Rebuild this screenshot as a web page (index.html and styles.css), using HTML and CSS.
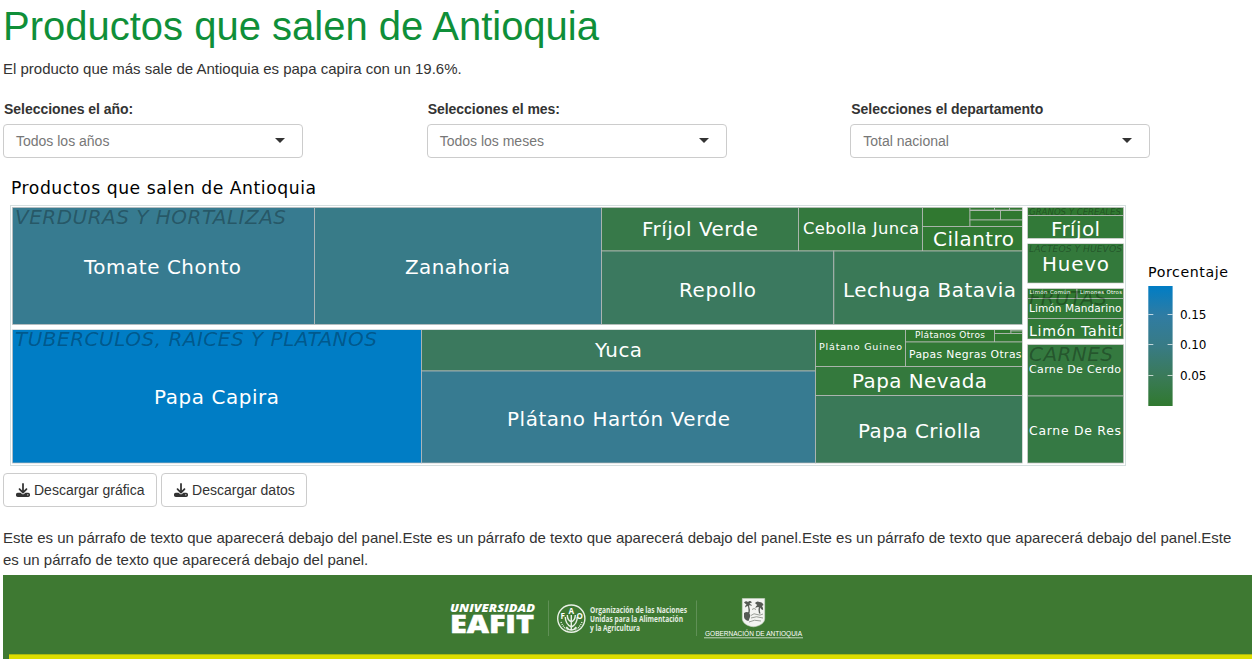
FILE: index.html
```html
<!DOCTYPE html>
<html lang="es">
<head>
<meta charset="utf-8">
<title>Productos que salen de Antioquia</title>
<link rel="stylesheet" href="styles.css">
</head>
<body>
<main class="page">
  <h1 class="title">Productos que salen de Antioquia</h1>
  <p class="lead">El producto que más sale de Antioquia es papa capira con un 19.6%.</p>
  <div class="filters">
    <div class="filter"><span class="filter-label">Selecciones el año:</span>
      <button class="select" type="button">Todos los años<span class="caret"></span></button></div>
    <div class="filter"><span class="filter-label">Selecciones el mes:</span>
      <button class="select" type="button">Todos los meses<span class="caret"></span></button></div>
    <div class="filter"><span class="filter-label">Selecciones el departamento</span>
      <button class="select" type="button">Total nacional<span class="caret"></span></button></div>
  </div>
  <svg class="chart" viewBox="3 170 1249 300" width="1249" height="300">
    <defs>
      <linearGradient id="scale" x1="0" y1="0" x2="0" y2="1">
        <stop offset="0" stop-color="#007dc5"/><stop offset=".25" stop-color="#307ca2"/><stop offset=".5" stop-color="#387b85"/><stop offset=".75" stop-color="#3a7a59"/><stop offset="1" stop-color="#30792f"/>
      </linearGradient>
    </defs>
    <text class="chart-title" x="11" y="193.5" textLength="305">Productos que salen de Antioquia</text>
    <rect class="frame" x="10.5" y="205.5" width="1115" height="260"/>
    <g class="tiles">
      <rect x="12.5" y="207.5" width="302" height="117" fill="#377b90"/>
      <rect x="314.5" y="207.5" width="287" height="117" fill="#387b88"/>
      <rect x="601.5" y="207.5" width="197" height="43.5" fill="#377949"/>
      <rect x="798.5" y="207.5" width="124" height="43.5" fill="#34793e"/>
      <rect x="922.5" y="207.5" width="47.5" height="19" fill="#307830"/>
      <rect x="970" y="207.5" width="24.5" height="2.5" fill="#307830"/>
      <rect x="994.5" y="207.5" width="15" height="2.5" fill="#307830"/>
      <rect x="1009.5" y="207.5" width="13" height="2.5" fill="#307830"/>
      <rect x="970" y="210.5" width="30.5" height="9.5" fill="#307830"/>
      <rect x="1000.5" y="210.5" width="22" height="9.5" fill="#307830"/>
      <rect x="970" y="220" width="52.5" height="6.5" fill="#307830"/>
      <rect x="922.5" y="226.5" width="100" height="24.5" fill="#317933"/>
      <rect x="601.5" y="251" width="232.3" height="73.5" fill="#3b795f"/>
      <rect x="833.8" y="251" width="188.7" height="73.5" fill="#3a7957"/>
      <rect x="12.5" y="329.5" width="409" height="133.5" fill="#007dc5"/>
      <rect x="421.5" y="329.5" width="394" height="41.5" fill="#3b795e"/>
      <rect x="421.5" y="371" width="394" height="92" fill="#377b91"/>
      <rect x="815.5" y="329.5" width="90" height="37" fill="#317936"/>
      <rect x="905.5" y="329.5" width="89" height="12.5" fill="#307830"/>
      <rect x="994.5" y="329.5" width="16.5" height="4" fill="#307830"/>
      <rect x="1011" y="329.5" width="11.5" height="1.5" fill="#307830"/>
      <rect x="1011" y="331" width="11.5" height="2.5" fill="#307830"/>
      <rect x="994.5" y="333.5" width="28" height="8.5" fill="#307830"/>
      <rect x="905.5" y="342" width="117" height="24.5" fill="#317936"/>
      <rect x="815.5" y="366.5" width="207" height="29" fill="#34793d"/>
      <rect x="815.5" y="395.5" width="207" height="67.5" fill="#3a7958"/>
      <rect x="1027.5" y="207.5" width="96" height="8" fill="#307831"/>
      <rect x="1027.5" y="215.5" width="96" height="23" fill="#327938"/>
      <rect x="1027.5" y="243.5" width="96" height="39.5" fill="#33793b"/>
      <rect x="1027.5" y="288.5" width="49.5" height="10" fill="#307831"/>
      <rect x="1077" y="288.5" width="46.5" height="10" fill="#307831"/>
      <rect x="1027.5" y="298.5" width="96" height="20" fill="#317936"/>
      <rect x="1027.5" y="318.5" width="96" height="20.5" fill="#317937"/>
      <rect x="1027.5" y="344.5" width="96" height="51.5" fill="#34793f"/>
      <rect x="1027.5" y="396" width="96" height="67" fill="#357944"/>
    </g>
    <g class="breaks">
      <path d="M12 327.2H1023M1024.9 207V464M1027 241.1H1124M1027 286H1124M1027 341.9H1124"/>
    </g>
    <g class="groups">
      <text x="15" y="223.5" textLength="271" font-size="20">VERDURAS Y HORTALIZAS</text>
      <text x="15" y="345.5" textLength="362" font-size="20">TUBERCULOS, RAICES Y PLATANOS</text>
      <text x="1029" y="214.5" textLength="92" font-size="8.6">GRANOS Y CEREALES</text>
      <text x="1029" y="251.5" textLength="93" font-size="9.2">LACTEOS Y HUEVOS</text>
      <text x="1029" y="304.5" textLength="78" font-size="20">FRUTAS</text>
      <text x="1029" y="360.5" textLength="84" font-size="20">CARNES</text>
    </g>
    <g class="labels">
      <text x="84" y="274" textLength="157">Tomate Chonto</text>
      <text x="405" y="274" textLength="105">Zanahoria</text>
      <text x="642" y="236" textLength="116">Fríjol Verde</text>
      <text x="803" y="234" textLength="116" font-size="16.4">Cebolla Junca</text>
      <text x="933" y="246" textLength="81">Cilantro</text>
      <text x="679" y="297" textLength="77">Repollo</text>
      <text x="843" y="297" textLength="173">Lechuga Batavia</text>
      <text x="154" y="404" textLength="125">Papa Capira</text>
      <text x="595" y="357" textLength="47">Yuca</text>
      <text x="507" y="426" textLength="223">Plátano Hartón Verde</text>
      <text x="819" y="350" textLength="83" font-size="9.5">Plátano Guineo</text>
      <text x="915" y="338" textLength="70" font-size="9">Plátanos Otros</text>
      <text x="909" y="358" textLength="112.5" font-size="10.8">Papas Negras Otras</text>
      <text x="852" y="388" textLength="135">Papa Nevada</text>
      <text x="858" y="438" textLength="123">Papa Criolla</text>
      <text x="1051" y="236" textLength="49">Fríjol</text>
      <text x="1042" y="271" textLength="67">Huevo</text>
      <text x="1029.5" y="294" textLength="41" font-size="5.4">Limón Común</text>
      <text x="1080" y="294" textLength="42" font-size="5.4">Limones Otros</text>
      <text x="1029" y="312" textLength="92.5" font-size="10.6">Limón Mandarino</text>
      <text x="1029" y="336" textLength="93" font-size="14.2">Limón Tahití</text>
      <text x="1029" y="373" textLength="92" font-size="11">Carne De Cerdo</text>
      <text x="1029" y="435" textLength="92" font-size="12.4">Carne De Res</text>
    </g>
    <g class="legend">
      <text x="1148" y="277" textLength="80" font-size="14.2">Porcentaje</text>
      <rect x="1148.3" y="286" width="24.3" height="120" fill="url(#scale)"/>
      <path d="M1148.3 314.5h5M1167.6 314.5h5M1148.3 344.5h5M1167.6 344.5h5M1148.3 375.5h5M1167.6 375.5h5"/>
      <text x="1180" y="319" textLength="26.5">0.15</text>
      <text x="1180" y="349" textLength="26.5">0.10</text>
      <text x="1180" y="380" textLength="26.5">0.05</text>
    </g>
  </svg>
  <div class="downloads">
    <button class="btn" type="button"><svg class="icon" viewBox="0 0 512 512"><path d="M288 32c0-18-14-32-32-32s-32 14-32 32v243l-73-74c-13-12-33-12-46 0s-12 33 0 46l128 128c13 12 33 12 46 0l128-128c12-13 12-33 0-46s-33-12-46 0l-73 74V32zM64 352c-35 0-64 29-64 64v32c0 35 29 64 64 64h384c35 0 64-29 64-64v-32c0-35-29-64-64-64H347l-46 45c-25 25-65 25-90 0l-46-45H64zm368 56a24 24 0 1 1 0 48 24 24 0 1 1 0-48z"/></svg>Descargar gráfica</button>
    <button class="btn" type="button"><svg class="icon" viewBox="0 0 512 512"><path d="M288 32c0-18-14-32-32-32s-32 14-32 32v243l-73-74c-13-12-33-12-46 0s-12 33 0 46l128 128c13 12 33 12 46 0l128-128c12-13 12-33 0-46s-33-12-46 0l-73 74V32zM64 352c-35 0-64 29-64 64v32c0 35 29 64 64 64h384c35 0 64-29 64-64v-32c0-35-29-64-64-64H347l-46 45c-25 25-65 25-90 0l-46-45H64zm368 56a24 24 0 1 1 0 48 24 24 0 1 1 0-48z"/></svg>Descargar datos</button>
  </div>
  <p class="note">Este es un párrafo de texto que aparecerá debajo del panel.Este es un párrafo de texto que aparecerá debajo del panel.Este es un párrafo de texto que aparecerá debajo del panel.Este es un párrafo de texto que aparecerá debajo del panel.</p>
  <footer class="footer">
    <svg class="logos" viewBox="440 575 370 79" width="370" height="79">
      <g class="eafit">
        <text class="university" x="450" y="612" font-size="10.5" textLength="85" lengthAdjust="spacingAndGlyphs">UNIVERSIDAD</text>
        <text class="heavy" x="450" y="632.5" font-size="24" textLength="84" lengthAdjust="spacingAndGlyphs">EAFIT</text>
      </g>
      <path class="divider" d="M548.5 600.5V636M696.5 600.5V636"/>
      <g class="fao">
        <circle cx="571.3" cy="618.6" r="13.6"/>
        <path d="M571.3 615V630M571.3 627q-6-3-6-10M571.3 627q6-3 6-10M571.3 622q-4-2-4-7M571.3 622q4-2 4-7M571.3 630q-3 0-5-3M571.3 630q3 0 5-3"/>
        <path class="motto" d="M561 622q3 7 8 8M582 622q-3 7-8 8"/>
        <text x="560.5" y="619">F</text><text x="568.4" y="614">A</text><text x="576.5" y="619">O</text>
      </g>
      <g class="org">
        <text x="590" y="613.2" textLength="97" lengthAdjust="spacingAndGlyphs">Organización de las Naciones</text>
        <text x="590" y="622" textLength="93" lengthAdjust="spacingAndGlyphs">Unidas para la Alimentación</text>
        <text x="590" y="631" textLength="50" lengthAdjust="spacingAndGlyphs">y la Agricultura</text>
      </g>
      <path class="shield" d="M742.3 598.5h22.4v20c0 4-4 7.500-11.200 8.300c-7.200-.8-11.200-4.300-11.200-8.300z"/>
      <path class="shield-art" d="M744 602.500q2-2 4-.5q2-2 4 .5q-2 0-2.500 1.500q2 0 2.500 2q-2-1-3-.5q1.500 4 .5 8.500h-1.200q.6-4-.3-8q-1.500 0-3 1.500q0-2 1.500-3q-1.500-1-2.500-2zM755 603q2-2.500 4.500-1q3 0 4 3l-1.500 1q1.500 2 1 4q-2-.5-3-2.500q-.5 3 .5 6h-1.500q-1-3-.2-6.500q-2 0-3.500 1q.5-2 2-3q-1.500-.8-2.300-2zM744 613q3-2 5 0q2 2 1 4l-1.500 4q-4-1-4.500-4z"/>
      <path class="shield-lines" d="M751 615.500q3-3 6-1q3 1.500 6-.5M751 618q5-2.500 12 0M749 622q5-3 12-1M752 609.500q2-2 4 0"/>
      <text class="gov" x="705" y="636.300" textLength="97" lengthAdjust="spacingAndGlyphs">GOBERNACIÓN DE ANTIOQUIA</text>
      <path class="gov-line" d="M704 637.800H803"/>
    </svg>
    <div class="stripe"></div>
  </footer>
</main>
</body>
</html>
```

FILE: styles.css
```css
* { box-sizing: border-box; }
html { overflow: hidden; }
body {
  margin: 0;
  overflow: hidden;
  height: 659px;
  background: #fff;
  color: #333;
  font-family: "Liberation Sans", Arial, sans-serif;
  font-size: 15px;
}
.page { padding-left: 3px; display: flex; flex-direction: column; }
.title {
  margin: 0;
  height: 58px;
  font-size: 40px;
  line-height: 52px;
  font-weight: 400;
  color: #0f8f39;
}
.lead { margin: 0; height: 41px; line-height: 22px; }
.filters { display: grid; grid-template-columns: repeat(3, 423.67px); height: 71px; }
.filter { display: flex; flex-direction: column; align-items: flex-start; }
.filter-label { height: 25px; line-height: 20px; font-size: 14px; font-weight: 700; padding-left: 1px; letter-spacing: -.04px; }
.select {
  display: flex;
  align-items: center;
  justify-content: space-between;
  width: 300px;
  height: 34px;
  padding: 0 17px 0 12px;
  border: 1px solid #ccc;
  border-radius: 4px;
  background: #fff;
  color: #777;
  font: 14px "Liberation Sans", Arial, sans-serif;
}
.caret { border: 5px solid transparent; border-top-color: #333; border-bottom: 0; margin-top: -2px; }
.chart { display: block; font-family: "DejaVu Sans", sans-serif; }
.chart-title { font-size: 17.2px; fill: #000; }
.frame { fill: none; stroke: #d5dfdf; }
.tiles rect { stroke: #bebebe; stroke-opacity: .72; stroke-width: 1; }
.breaks path { fill: none; stroke: #fff; stroke-width: 4.6; }
.groups { font-style: italic; fill: #000; fill-opacity: .3; }
.labels { fill: #fff; font-size: 19.9px; }
.legend { font-size: 12px; fill: #000; }
.legend path { stroke: #fff; stroke-opacity: .7; }
.downloads { display: flex; gap: 4px; padding-top: 3px; height: 57px; }
.btn {
  display: flex;
  align-items: center;
  gap: 4px;
  height: 34px;
  padding: 0 11.6px 0 12px;
  border: 1px solid #ccc;
  border-radius: 4px;
  background: #fff;
  color: #333;
  font: 14px "Liberation Sans", Arial, sans-serif;
}
.icon { width: 14px; height: 14px; fill: #333; }
.note { margin: 0; height: 48px; line-height: 22px; width: 1240px; }
.footer { height: 84px; background: #3e7932; display: flex; flex-direction: column; overflow: hidden; }
.logos { display: block; margin-left: 437px; flex: none; }
.stripe { height: 5px; margin-left: 6px; background: #dcdd00; border-top: 1px solid #a9b810; }
.eafit { fill: #fff; font-family: "Open Sans", sans-serif; font-weight: 800; }
.university { font-style: italic; }
.heavy { stroke: #fff; stroke-width: .5; }
.divider { stroke: #6a9660; stroke-width: .8; }
.fao { fill: none; stroke: #e8f0e5; stroke-width: 1.4; }
.fao text { fill: #fff; stroke: none; font: 700 8px "Open Sans", sans-serif; }
.fao .motto { stroke-dasharray: 1 1; }
.org { fill: #e5eee2; font: 700 8.2px "Open Sans", sans-serif; }
.shield { fill: #f3f4f1; stroke: #c9d3c5; stroke-width: .6; }
.shield-art { fill: #555a54; }
.shield-lines { fill: none; stroke: #80857e; stroke-width: .8; }
.gov { fill: #fff; font-size: 7.4px; }
.gov-line { stroke: #e5eee2; stroke-width: .8; }
```
